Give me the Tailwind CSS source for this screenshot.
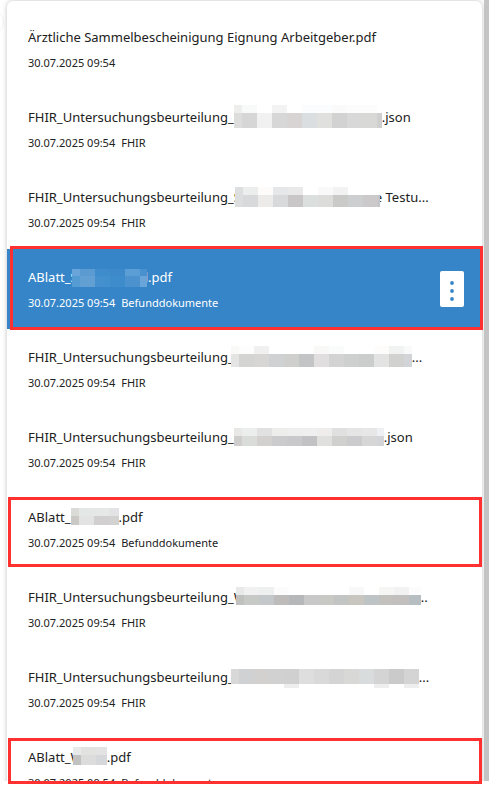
<!DOCTYPE html>
<html lang="de">
<head>
  <meta charset="UTF-8" />
  <meta name="viewport" content="width=device-width, initial-scale=1.0" />
  <title>Dokumente</title>
  <script src="https://cdn.jsdelivr.net/npm/@tailwindcss/browser@4"></script>
</head>
<body class="bg-white text-[#212121] font-['Noto_Sans',sans-serif]">
  <div class="relative flex h-screen flex-col pb-[5px]">
    <div class="relative flex min-h-0 flex-1 overflow-hidden">
      <div class="absolute top-2 -left-6 size-7 rounded-full border border-gray-100"></div>

      <!-- DOCUMENT LIST -->
      <main class="relative mt-px ml-[7px] min-w-0 flex-1 self-start rounded-t-md bg-white pt-2 shadow-[0_0_5px_rgba(0,0,0,0.25)]">
        <ul class="text-[13px]">
          <li class="h-20 px-[21px] pt-4">
            <div class="flex h-6 leading-6 whitespace-nowrap">Ärztliche Sammelbescheinigung Eignung Arbeitgeber.pdf</div>
            <div class="mt-[2px] flex gap-[6px] text-[11px] leading-6"><time>30.07.2025 09:54</time></div>
          </li>
          <li class="h-20 px-[21px] pt-4">
            <div class="flex h-6 leading-6 whitespace-nowrap"><span>FHIR_Untersuchungsbeurteilung_</span><svg class="h-6 w-[148px] shrink-0" data-first="8" data-bands="0,8 8,15" data-cells="eeeeec f8faf9 ffffff f3f3f3 ffffff fbfcfd fbfcfd fafafa fcfcfc fcfcfc ffffff/dddddb d6d6d6 f1f1f1 d7d7d7 d8d4d4 dbdee0 e0e0de d2d2d2 d8d8d8 d8d8d6 cfcfcf"></svg><span>.json</span></div>
            <div class="mt-[2px] flex gap-[6px] text-[11px] leading-6"><time>30.07.2025 09:54</time><span>FHIR</span></div>
          </li>
          <li class="h-20 px-[21px] pt-4">
            <div class="flex h-6 leading-6 whitespace-nowrap"><span>FHIR_Untersuchungsbeurteilung_S</span><svg class="relative -ml-[6px] h-6 w-[145px] shrink-0" data-first="8" data-bands="2,8 10,12" data-cells="dcdedf eceeed fdfcfa e5e7e9 e9e9e9 ffffff f9f9f9 f2f2f2 ffffff ffffff ffffff/dcdddd d8d9da edebe9 d7d9da c9c6c8 dbdfde dcdddb cacbc9 cdced0 cbc9ca c3c4c7"></svg><span class="-ml-[5px]">e Testu...</span></div>
            <div class="mt-[2px] flex gap-[6px] text-[11px] leading-6"><time>30.07.2025 09:54</time><span>FHIR</span></div>
          </li>
          <li class="relative h-20 bg-[#3585c8] px-[21px] pt-4 text-white">
            <div class="flex h-6 leading-6 whitespace-nowrap"><span>ABlatt_S</span><svg class="relative -ml-[6px] h-6 w-[75px] shrink-0" data-first="8" data-bands="4,7 11,11" data-cells="69a5d8 5b9bd1 3f8ccc 3d89ca 5b9ed5 4990ce 4490cf/559bd4 629fd3 4490cf 3f8ccc 4b92cf 69a5d8 4490cf"></svg><span class="-ml-[2px]">l.pdf</span></div>
            <div class="mt-[2px] flex gap-[6px] text-[11px] leading-6"><time>30.07.2025 09:54</time><span>Befunddokumente</span></div>
            <button type="button" aria-label="Aktionen" class="absolute top-[22px] right-[18px] flex h-9 w-6 items-center justify-center rounded-xs bg-white">
              <svg class="h-6 w-4" viewBox="0 0 16 24" fill="#3585c8"><circle cx="8" cy="6" r="1.9" /><circle cx="8" cy="14" r="1.9" /><circle cx="8" cy="22" r="1.9" /></svg>
            </button>
            <div class="absolute -top-[3px] -right-px -bottom-px left-[3px] border-3 border-[#ff3030]"></div>
          </li>
          <li class="h-20 px-[21px] pt-4">
            <div class="flex h-6 leading-6 whitespace-nowrap"><span>FHIR_Untersuchungsbeurteilung_</span><svg class="relative -ml-[3px] h-6 w-[181px] shrink-0" data-first="8" data-bands="1,8 9,13" data-cells="f9f9f7 fdfdfd f0f0f0 ffffff ffffff ffffff f8f8f6 fafcfb ffffff ffffff fefcfb f0f3f2 f9f9f9/e3e4e3 d4d4d2 d8d6d4 cfd1d2 cfcfcd c3c4c6 e0dedf d3d3d3 cecfcf cbcdcc e3e3e3 d1d1cf d2d4d7"></svg><span>...</span></div>
            <div class="mt-[2px] flex gap-[6px] text-[11px] leading-6"><time>30.07.2025 09:54</time><span>FHIR</span></div>
          </li>
          <li class="h-20 px-[21px] pt-4">
            <div class="flex h-6 leading-6 whitespace-nowrap"><span>FHIR_Untersuchungsbeurteilung_</span><svg class="h-6 w-[150px] shrink-0" data-first="8" data-bands="3,8 11,10" data-cells="e8e8e7 eceeed e1e1e1 ededec eeeeee efefef eeedec dfe0df e5e5e5 e7e7e7 eef0f3/cfcecd dadcda d2d1d0 cbcacc c9c9cb c2c2c4 e0e1df d0d0cf cbcbcd d6d6d6 d2d4d8"></svg><span>.json</span></div>
            <div class="mt-[2px] flex gap-[6px] text-[11px] leading-6"><time>30.07.2025 09:54</time><span>FHIR</span></div>
          </li>
          <li class="relative h-20 px-[21px] pt-4">
            <div class="flex h-6 leading-6 whitespace-nowrap"><span>ABlatt_</span><svg class="h-6 w-[48px] shrink-0" data-first="8" data-bands="3,8 11,9" data-cells="dadbd6 e3e7e6 e6e8e8 e3e3e5 e7e7e7/cbc9c5 e3e3e3 d1cfd0 d2d2d0 cbcace"></svg><span>.pdf</span></div>
            <div class="mt-[2px] flex gap-[6px] text-[11px] leading-6"><time>30.07.2025 09:54</time><span>Befunddokumente</span></div>
            <div class="absolute top-2 right-0 bottom-[2px] left-px border-3 border-[#ff3030]"></div>
          </li>
          <li class="h-20 px-[21px] pt-4">
            <div class="flex h-6 leading-6 whitespace-nowrap"><span>FHIR_Untersuchungsbeurteilung_W</span><svg class="relative -ml-[10px] h-6 w-[185px] shrink-0" data-first="8" data-bands="2,8 10,10" data-cells="e9e9e9 f1f1f1 eef0ef fcfcfc ffffff ffffff ffffff ffffff f8f8f8 ffffff f6f6f4 f2f2f2 fcfcfc/c0c1bf c7c9c7 c4c8cb bebcba b6b7b9 c8c8c8 c8c8c5 c2c5c4 c8c6be bec4c5 c2c1be c1c0be b6bec1"></svg><span>..</span></div>
            <div class="mt-[2px] flex gap-[6px] text-[11px] leading-6"><time>30.07.2025 09:54</time><span>FHIR</span></div>
          </li>
          <li class="h-20 px-[21px] pt-4">
            <div class="flex h-6 leading-6 whitespace-nowrap"><span>FHIR_Untersuchungsbeurteilung_</span><svg class="relative -ml-[3px] h-6 w-[188px] shrink-0" data-first="8" data-bands="4,15 19,4" data-cells="d9d8d8 d0d1d3 d3d1d0 d0d1d0 d0d0d0 dedede d8d9d8 d4d4d4 d8d8d6 d8dcdd d4d4d4 cacaca d4d4d4/ffffff ffffff ffffff ffffff eeeeee ffffff ffffff ffffff ffffff ffffff eeeeee ffffff eeeeee"></svg><span>...</span></div>
            <div class="mt-[2px] flex gap-[6px] text-[11px] leading-6"><time>30.07.2025 09:54</time><span>FHIR</span></div>
          </li>
          <li class="h-20 px-[21px] pt-4">
            <div class="flex h-6 leading-6 whitespace-nowrap"><span>ABlatt_W</span><svg class="relative -ml-[10px] h-6 w-[34px] shrink-0" data-first="8" data-bands="2,8 10,10" data-cells="e8eae9 e2e2e0 e3e3e3/c1c1c1 dcdcdc d6d7db"></svg><span>.pdf</span></div>
            <div class="mt-[2px] flex gap-[6px] text-[11px] leading-6"><time>30.07.2025 09:54</time><span>Befunddokumente</span></div>
          </li>
        </ul>
      </main>

      <!-- SCROLLBAR -->
      <div class="relative ml-[2px] w-[5px] bg-[#c4c4c4]"></div>
    </div>
    <div class="absolute right-[7px] bottom-[2px] left-2 h-[46px] border-3 border-[#ff3030]"></div>
  </div>

  <script>
    // pixelated name blocks: first cell is narrower, the others are 15px wide
    document.querySelectorAll("svg[data-cells]").forEach((svg) => {
      const first = Number(svg.dataset.first);
      const bands = svg.dataset.bands.split(" ");
      svg.dataset.cells.split("/").forEach((line, i) => {
        const [y, height] = bands[i].split(",");
        line.split(" ").forEach((color, n) => {
          const rect = document.createElementNS("http://www.w3.org/2000/svg", "rect");
          rect.setAttribute("x", n === 0 ? 0 : first + (n - 1) * 15);
          rect.setAttribute("y", y);
          rect.setAttribute("width", n === 0 ? first : 15);
          rect.setAttribute("height", height);
          rect.setAttribute("fill", "#" + color);
          svg.appendChild(rect);
        });
      });
    });
  </script>
</body>
</html>
